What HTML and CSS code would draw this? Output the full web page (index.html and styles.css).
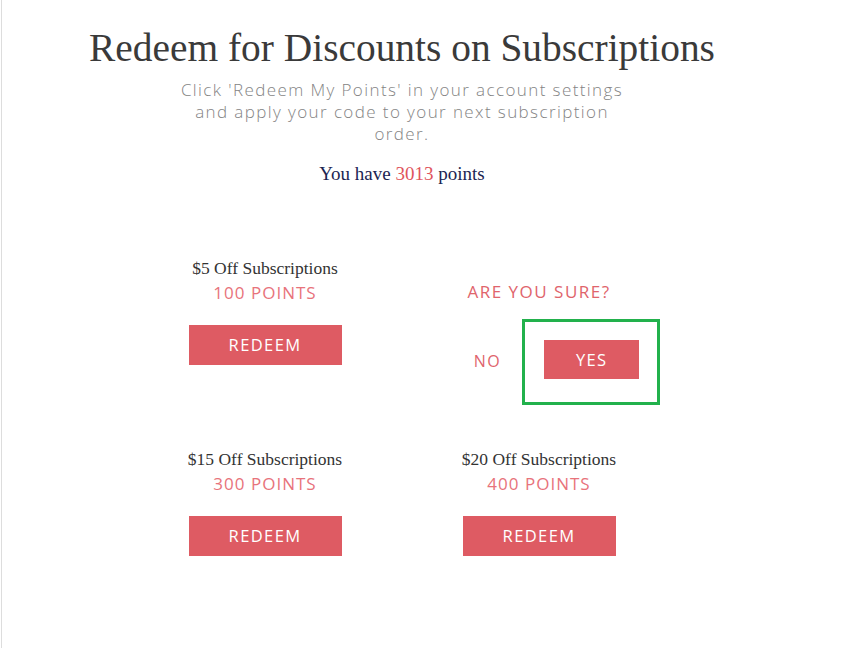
FILE: index.html
```html
<!DOCTYPE html>
<html lang="en">
    <head>
        <meta charset="utf-8">
        <meta name="viewport" content="width=device-width, initial-scale=1">
        <title>Redeem</title>
        <link rel="stylesheet" href="styles.css">
    </head>
    <body>
        <div class="page">
            <div class="container">
                <h1>Redeem for Discounts on Subscriptions</h1>
                <p class="intro">Click 'Redeem My Points' in your account settings and apply your code to your next subscription order.</p>
                <p class="balance">You have <span class="num">3013</span> points</p>

                <div class="rewards">
                    <div class="reward">
                        <div class="name">$5 Off Subscriptions</div>
                        <div class="cost">100 POINTS</div>
                        <a class="btn" href="#">REDEEM</a>
                    </div>
                    <div class="reward confirm">
                        <div class="sure">ARE YOU SURE?</div>
                        <div class="choices">
                            <a class="no" href="#">NO</a>
                            <div class="highlight">
                                <a class="btn yes" href="#">YES</a>
                            </div>
                        </div>
                    </div>
                    <div class="reward">
                        <div class="name">$15 Off Subscriptions</div>
                        <div class="cost">300 POINTS</div>
                        <a class="btn" href="#">REDEEM</a>
                    </div>
                    <div class="reward">
                        <div class="name">$20 Off Subscriptions</div>
                        <div class="cost">400 POINTS</div>
                        <a class="btn" href="#">REDEEM</a>
                    </div>
                </div>
            </div>
        </div>
    </body>
</html>
```

FILE: styles.css
```css
body {
    margin: 0px;
    background-color: white;
    font-family: "Open Sans", sans-serif;
}

.page {
    margin-left: 1px;
    border-left: 1px solid #dddddd;
    min-height: 100vh;
    box-sizing: border-box;
}

.container {
    width: 800px;
    text-align: center;
    padding-top: 26px;
}

h1 {
    margin: 0px;
    font-family: "Liberation Serif", serif;
    font-weight: normal;
    font-size: 39.4px;
    line-height: 44px;
    color: #3a3a3a;
}

.intro {
    width: 450px;
    margin: 9px auto 0px;
    font-size: 17px;
    line-height: 22px;
    font-weight: 300;
    letter-spacing: 1.4px;
    color: #848484;
}

.balance {
    margin: 18px 0px 0px;
    font-family: "Liberation Serif", serif;
    font-size: 19px;
    color: #1c2552;
}

.balance .num {
    color: #e0545c;
}

.rewards {
    width: 548px;
    margin: 73px auto 0px;
    display: grid;
    grid-template-columns: 274px 274px;
    row-gap: 44px;
}

.reward {
    display: flex;
    flex-direction: column;
    align-items: center;
}

.name {
    font-family: "Liberation Serif", serif;
    font-size: 17.5px;
    line-height: 20px;
    color: #333333;
}

.cost {
    margin-top: 4px;
    font-size: 17px;
    line-height: 22px;
    letter-spacing: 1px;
    color: #e8737b;
}

.btn {
    display: block;
    margin-top: 21px;
    width: 153px;
    height: 40px;
    line-height: 40px;
    background-color: #de5b63;
    color: white;
    text-decoration: none;
    font-size: 16.5px;
    letter-spacing: 1.4px;
}

.sure {
    margin-top: 23px;
    font-size: 17px;
    line-height: 22px;
    letter-spacing: 1.5px;
    color: #e0646c;
}

.choices {
    display: flex;
    align-items: center;
    margin-top: 16px;
    margin-left: 56px;
}

.no {
    color: #e0646c;
    text-decoration: none;
    font-size: 16px;
    letter-spacing: 1.5px;
    margin-right: 21px;
    margin-top: -2px;
}

.highlight {
    border: 3px solid #22b14c;
    padding: 18px 18px 23px 19px;
}

.btn.yes {
    margin-top: 0px;
    width: 95px;
    height: 39px;
    line-height: 39px;
}
```
